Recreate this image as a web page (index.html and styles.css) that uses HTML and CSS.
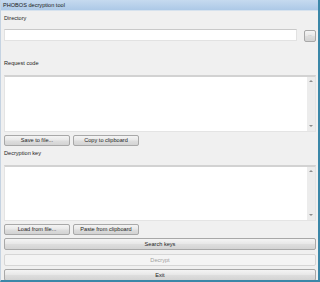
FILE: index.html
```html
<!DOCTYPE html>
<html>
<head>
<meta charset="utf-8">
<link rel="stylesheet" href="styles.css">
</head>
<body>
<div class="window">
  <div class="titlebar">PHOBOS decryption tool</div>
  <div class="content">
    <div class="label first">Directory</div>
    <div class="dir-row">
      <div class="textbox"></div>
      <div class="btn browse">...</div>
    </div>
    <div class="label gap18">Request code</div>
    <div class="memo tall">
      <div class="memo-body"></div>
      <div class="scroll"><span class="arr up"></span><span class="arr down"></span></div>
    </div>
    <div class="btn-row">
      <div class="btn small">Save to file...</div>
      <div class="btn small">Copy to clipboard</div>
    </div>
    <div class="label gap4">Decryption key</div>
    <div class="memo">
      <div class="memo-body"></div>
      <div class="scroll"><span class="arr up"></span><span class="arr down"></span></div>
    </div>
    <div class="btn-row">
      <div class="btn small">Load from file...</div>
      <div class="btn small">Paste from clipboard</div>
    </div>
    <div class="btn wide m3">Search keys</div>
    <div class="btn wide disabled m4">Decrypt</div>
    <div class="btn wide m3">Exit</div>
  </div>
</div>
</body>
</html>
```
FILE: styles.css
```css
html, body {
  margin: 0;
  padding: 0;
  background: #f0f0f0;
}
.window {
  width: 320px;
  height: 282px;
  box-sizing: border-box;
  background: #f0f0f0;
  border-left: 1px solid #c5d3e2;
  border-right: 2px solid #3b87a8;
  border-bottom: 2px solid #3b87a8;
  display: flex;
  flex-direction: column;
  font-family: "Liberation Sans", Arial, sans-serif;
  font-size: 5.6px;
  color: #1e1e1e;
  overflow: hidden;
}
.titlebar {
  height: 11px;
  line-height: 11px;
  padding-left: 2px;
  background: linear-gradient(#c6daef, #adc9e7);
  border-bottom: 1px solid #d6e2ee;
  box-sizing: border-box;
  color: #1a1a1a;
  white-space: nowrap;
}
.content {
  padding: 0 2px 0 3px;
  display: flex;
  flex-direction: column;
}
.label {
  height: 7px;
  line-height: 7px;
  white-space: nowrap;
}
.label.first { margin-top: 4px; }
.label.gap18 { margin-top: 18px; }
.label.gap4 { margin-top: 4px; }
.dir-row {
  margin-top: 7px;
  display: flex;
  align-items: flex-start;
  gap: 7px;
  height: 13px;
}
.textbox {
  flex: 1;
  height: 12px;
  box-sizing: border-box;
  background: #fff;
  border: 1px solid #e2e2e2;
  border-top-color: #c9c9c9;
}
.btn {
  box-sizing: border-box;
  border: 1px solid #a8a8a8;
  border-radius: 2px;
  background: linear-gradient(#f4f4f4, #e8e8e8 45%, #dddddd 55%, #d3d3d3);
  text-align: center;
  white-space: nowrap;
  color: #1e1e1e;
}
.browse {
  width: 12px;
  height: 12px;
  margin-top: 1px;
  line-height: 8px;
  font-size: 4px;
  color: #888;
}
.memo {
  margin-top: 8px;
  height: 56px;
  box-sizing: border-box;
  display: flex;
  background: #fff;
  border: 1px solid #e4e4e4;
  border-top: 2px solid #d2d2d2;
}
.memo.tall { height: 57px; }
.memo-body { flex: 1; }
.scroll {
  width: 8px;
  background: #ececec;
  display: flex;
  flex-direction: column;
  justify-content: space-between;
  align-items: center;
  padding: 3px 0 4px;
  box-sizing: border-box;
}
.arr {
  width: 0;
  height: 0;
  border-left: 2px solid transparent;
  border-right: 2px solid transparent;
}
.arr.up { border-bottom: 2px solid #8c8c8c; }
.arr.down { border-top: 2px solid #8c8c8c; }
.btn-row {
  margin-top: 3px;
  display: flex;
  gap: 3px;
}
.btn.small {
  width: 66px;
  height: 11px;
  line-height: 9px;
}
.btn.wide {
  height: 12px;
  line-height: 10px;
}
.m3 { margin-top: 3px; }
.m4 { margin-top: 4px; }
.btn.disabled {
  border-color: #d6d6d6;
  background: #f4f4f4;
  color: #a0a0a0;
}
```
